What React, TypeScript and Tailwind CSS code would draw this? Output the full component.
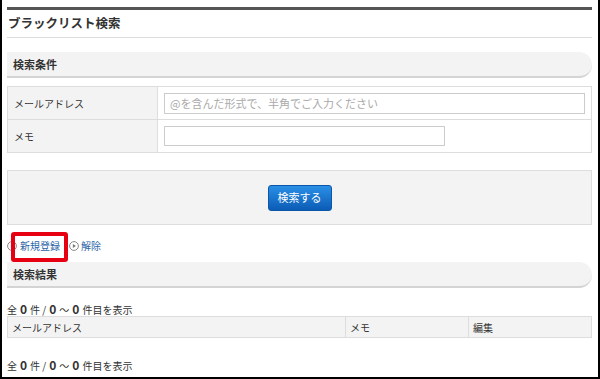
import React from 'react'

function PlayCircle() {
  return (
    <svg width="10" height="10" viewBox="0 0 10 10" className="shrink-0">
      <circle cx="5" cy="5" r="4.4" fill="none" stroke="#888" strokeWidth="1" />
      <path d="M3.9 3 L6.9 5 L3.9 7 Z" fill="#777" />
    </svg>
  )
}

function SectionHeader({ label }: { label: string }) {
  return (
    <div className="h-[26px] bg-[#f3f3f3] rounded-r-[13px] border-b-2 border-[#d4d4d4] flex items-center pl-[6px] text-[11px] font-bold text-[#333]">
      {label}
    </div>
  )
}

function Count() {
  return (
    <div className="h-[14px] text-[10px] text-[#333] flex items-center gap-[3px]">
      <span>全</span>
      <b className="text-[12px]">0</b>
      <span>件 /</span>
      <b className="text-[12px]">0</b>
      <span>～</span>
      <b className="text-[12px]">0</b>
      <span>件目を表示</span>
    </div>
  )
}

export default function App() {
  return (
    <div className="w-[600px] h-[379px] bg-white border-x-2 border-b-2 border-black overflow-hidden font-['Noto_Sans_CJK_JP',sans-serif]">
      <div className="pl-[5px] pr-[6px] pt-[7px]">
        {/* Page title */}
        <div className="h-[3px] bg-[#555]" />
        <div className="h-[28px] flex items-center pl-px text-[12.5px] font-bold text-[#333] border-b border-[#ddd]">
          ブラックリスト検索
        </div>

        {/* Search conditions */}
        <div className="mt-[14px]">
          <SectionHeader label="検索条件" />
        </div>
        <div className="mt-[8px] border border-[#ddd] text-[10px] text-[#333]">
          <div className="h-[33px] flex border-b border-[#ddd]">
            <div className="w-[150px] bg-[#f3f3f3] border-r border-[#ddd] flex items-center pl-[6px]">メールアドレス</div>
            <div className="flex-1 flex items-center pl-[6px] pr-[6px]">
              <div className="w-[421px] h-[21px] border border-[#ccc] flex items-center pl-[5px] text-[11px] text-[#aaa]">
                @を含んだ形式で、半角でご入力ください
              </div>
            </div>
          </div>
          <div className="h-[32px] flex">
            <div className="w-[150px] bg-[#f3f3f3] border-r border-[#ddd] flex items-center pl-[6px]">メモ</div>
            <div className="flex-1 flex items-center pl-[6px]">
              <div className="w-[281px] h-[20px] border border-[#ccc]" />
            </div>
          </div>
        </div>

        <div className="mt-[17px] h-[55px] bg-[#f3f3f3] border border-[#ddd] flex items-center justify-center">
          <button className="w-[64px] h-[26px] rounded-[3px] bg-gradient-to-b from-[#2a8fe6] to-[#0b5cb5] border border-[#0a56a8] text-white text-[11px]">
            検索する
          </button>
        </div>

        {/* Links */}
        <div className="h-[37px] flex items-center pt-[5px] text-[10px] leading-[14px] text-[#2a64a8]">
          <PlayCircle />
          <span className="relative ml-[3px]">
            新規登録
            <span className="absolute left-[-9px] right-[-8px] top-[-7px] bottom-[-9px] border-[4px] border-[#e60012] rounded-[3px]" />
          </span>
          <span className="ml-[9px]"><PlayCircle /></span>
          <span className="ml-[2px]">解除</span>
        </div>

        {/* Results */}
        <SectionHeader label="検索結果" />
        <div className="mt-[14px]">
          <Count />
        </div>
        <div className="h-[22px] flex bg-[#f3f3f3] border border-[#ddd] text-[10px] text-[#333]">
          <div className="w-[338px] border-r border-[#ddd] flex items-center pl-[4px]">メールアドレス</div>
          <div className="w-[123px] border-r border-[#ddd] flex items-center pl-[4px]">メモ</div>
          <div className="flex-1 flex items-center pl-[4px]">編集</div>
        </div>
        <div className="mt-[20px]">
          <Count />
        </div>
      </div>
    </div>
  )
}
